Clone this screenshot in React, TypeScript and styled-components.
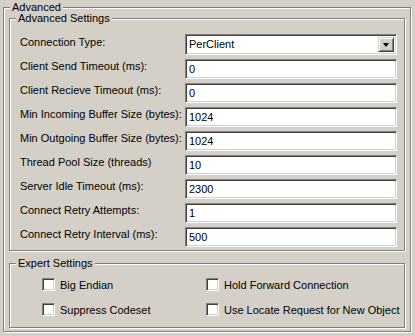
import { Fragment } from "react";
import styled, { createGlobalStyle } from "styled-components";

const GlobalStyle = createGlobalStyle`
  html, body {
    margin: 0;
    padding: 0;
    background: #d4d0c8;
  }
  body {
    font-family: "Liberation Sans", Arial, sans-serif;
    font-size: 11px;
    color: #000;
  }
`;

const Page = styled.div`
  width: 415px;
  height: 336px;
  padding: 7px 0 0 3px;
  box-sizing: border-box;
  background: #d4d0c8;
`;

// etched Win2000 group box: gray line with a white one just below/right
const Group = styled.div<{ $w: number; $h: number }>`
  position: relative;
  box-sizing: border-box;
  width: ${(p) => p.$w}px;
  height: ${(p) => p.$h}px;
  border: 1px solid #808080;
  box-shadow: inset 1px 1px 0 #fff, 1px 1px 0 #fff;
`;

const Caption = styled.span`
  position: absolute;
  top: -7px;
  left: 6px;
  padding: 0 2px;
  line-height: 13px;
  background: #d4d0c8;
  white-space: nowrap;
`;

const OuterBody = styled.div`
  padding: 10px 0 0 5px;
  display: flex;
  flex-direction: column;
  gap: 12px;
`;

const FormGrid = styled.div`
  display: grid;
  grid-template-columns: 165px 212px;
  grid-auto-rows: 20px;
  row-gap: 4px;
  padding: 16px 0 0 10px;
`;

const Label = styled.label`
  padding-top: 1px;
  line-height: 13px;
  white-space: nowrap;
`;

const Field = styled.div`
  position: relative;
  box-sizing: border-box;
  height: 20px;
  background: #fff;
  border: 1px solid;
  border-color: #808080 #fff #fff #808080;
  box-shadow: inset 1px 1px 0 #404040, inset -1px -1px 0 #d4d0c8;
  padding: 0 0 0 3px;
  line-height: 18px;
  white-space: nowrap;
`;

const SelectField = styled(Field)`
  height: 21px;
  margin-top: -1px;
  line-height: 19px;
`;

const DropButton = styled.div`
  position: absolute;
  top: 2px;
  right: 2px;
  width: 16px;
  height: 15px;
  box-sizing: border-box;
  background: #d4d0c8;
  border: 1px solid;
  border-color: #d4d0c8 #404040 #404040 #d4d0c8;
  box-shadow: inset 1px 1px 0 #fff, inset -1px -1px 0 #808080;
  display: flex;
  align-items: center;
  justify-content: center;
`;

const Arrow = styled.span`
  width: 0;
  height: 0;
  border-left: 3.5px solid transparent;
  border-right: 3.5px solid transparent;
  border-top: 4px solid #000;
  margin-top: 1px;
`;

const CheckGrid = styled.div`
  display: grid;
  grid-template-columns: 164px 190px;
  row-gap: 12px;
  padding: 14px 0 0 32px;
`;

const CheckRow = styled.div`
  display: flex;
  align-items: center;
  gap: 5px;
  height: 13px;
  white-space: nowrap;
`;

const Box = styled.span`
  width: 13px;
  height: 13px;
  box-sizing: border-box;
  background: #fff;
  border: 1px solid;
  border-color: #808080 #fff #fff #808080;
  box-shadow: inset 1px 1px 0 #404040, inset -1px -1px 0 #d4d0c8;
  flex: none;
`;

const rows: [string, string][] = [
  ["Client Send Timeout (ms):", "0"],
  ["Client Recieve Timeout (ms):", "0"],
  ["Min Incoming Buffer Size (bytes):", "1024"],
  ["Min Outgoing Buffer Size (bytes):", "1024"],
  ["Thread Pool Size (threads)", "10"],
  ["Server Idle Timeout (ms):", "2300"],
  ["Connect Retry Attempts:", "1"],
  ["Connect Retry Interval (ms):", "500"],
];

const checks = [
  "Big Endian",
  "Hold Forward Connection",
  "Suppress Codeset",
  "Use Locate Request for New Object",
];

export default function App() {
  return (
    <>
      <GlobalStyle />
      <Page>
        <Group $w={408} $h={325}>
          <Caption>Advanced</Caption>
          <OuterBody>
            <Group $w={396} $h={233}>
              <Caption>Advanced Settings</Caption>
              <FormGrid>
                <Label>Connection Type:</Label>
                <SelectField>
                  PerClient
                  <DropButton>
                    <Arrow />
                  </DropButton>
                </SelectField>
                {rows.map(([label, value]) => (
                  <Fragment key={label}>
                    <Label>{label}</Label>
                    <Field>{value}</Field>
                  </Fragment>
                ))}
              </FormGrid>
            </Group>
            <Group $w={396} $h={65}>
              <Caption>Expert Settings</Caption>
              <CheckGrid>
                {checks.map((c) => (
                  <CheckRow key={c}>
                    <Box />
                    {c}
                  </CheckRow>
                ))}
              </CheckGrid>
            </Group>
          </OuterBody>
        </Group>
      </Page>
    </>
  );
}
